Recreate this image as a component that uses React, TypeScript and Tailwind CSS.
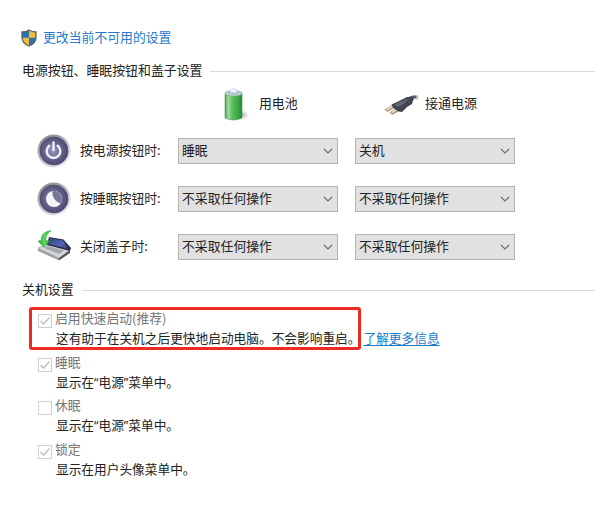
import type { ReactNode } from "react";

const ROWS = [
  { label: "按电源按钮时:", icon: <PowerIcon />, battery: "睡眠", plugged: "关机" },
  { label: "按睡眠按钮时:", icon: <SleepIcon />, battery: "不采取任何操作", plugged: "不采取任何操作" },
  { label: "关闭盖子时:", icon: <LidIcon />, battery: "不采取任何操作", plugged: "不采取任何操作" },
];

const OPTIONS = [
  {
    title: "启用快速启动(推荐)",
    desc: "这有助于在关机之后更快地启动电脑。不会影响重启。",
    checked: true,
    link: "了解更多信息",
  },
  { title: "睡眠", desc: "显示在“电源”菜单中。", checked: true },
  { title: "休眠", desc: "显示在“电源”菜单中。", checked: false },
  { title: "锁定", desc: "显示在用户头像菜单中。", checked: true },
];

function ShieldIcon() {
  return (
    <svg width="16" height="18" viewBox="0 0 16 18">
      <path d="M8 1 C6 2.4 3.5 3 1 3 V8 C1 12.5 4 15.5 8 17 C12 15.5 15 12.5 15 8 V3 C12.5 3 10 2.4 8 1Z" fill="#f3bd3c" />
      <path d="M8 1 C6 2.4 3.5 3 1 3 V8.8 H8Z" fill="#2a71ad" />
      <path d="M8 8.8 H15 C14.6 12.9 11.8 15.6 8 17Z" fill="#2a71ad" />
      <path d="M8 1 C6 2.4 3.5 3 1 3 V8 C1 12.5 4 15.5 8 17 C12 15.5 15 12.5 15 8 V3 C12.5 3 10 2.4 8 1Z" fill="none" stroke="#59636b" strokeWidth="1.3" />
    </svg>
  );
}

function BatteryIcon() {
  return (
    <svg width="32" height="36" viewBox="0 0 32 36">
      <defs>
        <linearGradient id="cell" x1="0" x2="1">
          <stop offset="0" stopColor="#4aa552" />
          <stop offset="0.2" stopColor="#a1dca0" />
          <stop offset="0.42" stopColor="#5fbe60" />
          <stop offset="0.8" stopColor="#35a340" />
          <stop offset="1" stopColor="#2a8535" />
        </linearGradient>
        <radialGradient id="cellShadow">
          <stop offset="0" stopColor="#8b8b8b" stopOpacity="0.7" />
          <stop offset="1" stopColor="#aaa" stopOpacity="0" />
        </radialGradient>
      </defs>
      <ellipse cx="22" cy="29" rx="7" ry="5" fill="url(#cellShadow)" />
      <path d="M5 8 V32 Q13.5 36 22 32 V8Z" fill="url(#cell)" stroke="#52965a" strokeWidth="0.6" />
      <ellipse cx="13.5" cy="7.5" rx="8.5" ry="2.8" fill="#b9d6bf" stroke="#71a77a" strokeWidth="0.8" />
      <path d="M8 6 Q10 2.5 13.5 2.500 Q17 2.500 19 6 L17.500 8.500 Q13.500 10 9.500 8.500Z" fill="#b4c1d7" />
      <ellipse cx="13.5" cy="4.800" rx="3.500" ry="1.800" fill="#f0f5f9" />
    </svg>
  );
}

function PlugIcon() {
  return (
    <svg width="36" height="24" viewBox="0 0 36 24" className="translate-y-px">
      <path d="M24 6.5 Q28 3.500 34 4.500" fill="none" stroke="#b3b4b9" strokeWidth="4" />
      <path d="M23 6.500 Q28 3 32 4" fill="none" stroke="#5c5e66" strokeWidth="2.600" />
      <path d="M1 16.500 L9 12 L11.500 14 L3 18.500Z" fill="#cba987" stroke="#765f51" strokeWidth="0.5" />
      <path d="M6 19.500 L13 15.500 L15.500 17.500 L8 21.500Z" fill="#cba987" stroke="#765f51" strokeWidth="0.5" />
      <path d="M2.500 16.500 L8 13.500 M7.500 19.500 L13 16.500" stroke="#fae6cb" strokeWidth="1.100" />
      <path d="M7.500 11.500 L15 8 L23 4 L30 4.500 L28 11 L23 14 L18 19 L15 18.500 Q9 16 7.500 11.500Z" fill="#42454f" />
      <path d="M10 11.500 L17 8.500 L25 5.500 L20 11 L14 14Z" fill="#626776" />
    </svg>
  );
}

function RoundButton({ id, children }: { id: string; children: ReactNode }) {
  return (
    <svg width="34" height="34" viewBox="0 0 34 34">
      <defs>
        <radialGradient id={id} cx="0.46" cy="0.48" r="0.58">
          <stop offset="0" stopColor="#9b9ac0" />
          <stop offset="0.55" stopColor="#64628c" />
          <stop offset="1" stopColor="#45426a" />
        </radialGradient>
        <linearGradient id={`${id}Rim`} x1="0" y1="0" x2="0.7" y2="1">
          <stop offset="0" stopColor="#797a82" />
          <stop offset="0.5" stopColor="#b4b4bd" />
          <stop offset="1" stopColor="#ecebf5" />
        </linearGradient>
      </defs>
      <circle cx="17" cy="17" r="16.5" fill={`url(#${id}Rim)`} />
      <circle cx="17" cy="17" r="14" fill={`url(#${id})`} stroke="#51506b" strokeWidth="0.8" />
      {children}
    </svg>
  );
}

function PowerIcon() {
  return (
    <RoundButton id="power">
      <path d="M12.3 11.8 A6.800 6.800 0 1 0 20.700 11.8" fill="none" stroke="#f1f0f8" strokeWidth="2.400" strokeLinecap="round" />
      <path d="M16.5 8.5 V16" stroke="#f1f0f8" strokeWidth="2.400" strokeLinecap="round" />
    </RoundButton>
  );
}

function SleepIcon() {
  return (
    <RoundButton id="sleep">
      <circle cx="17" cy="17" r="8" fill="#f5f5f8" />
      <path d="M15.500 9.200 A8 8 0 0 1 23.500 21.500 C19.500 20 14.500 15.500 15.500 9.200Z" fill="#77759a" />
    </RoundButton>
  );
}

function LidIcon() {
  return (
    <svg width="36" height="34" viewBox="0 0 36 34">
      <defs>
        <linearGradient id="screen" x1="0" y1="0" x2="1" y2="1">
          <stop offset="0" stopColor="#34437e" />
          <stop offset="0.6" stopColor="#5365b4" />
          <stop offset="1" stopColor="#343b68" />
        </linearGradient>
        <linearGradient id="arrow" x1="0" y1="0" x2="1" y2="0">
          <stop offset="0" stopColor="#239b32" />
          <stop offset="0.5" stopColor="#5fdb5e" />
          <stop offset="1" stopColor="#259938" />
        </linearGradient>
      </defs>
      <path d="M1 18 L22 27.500 V30.500 L1 21Z" fill="#a0a2a7" />
      <path d="M1 18 L9 14 L33 20 L22 28Z" fill="#d5d7da" stroke="#9a9da2" strokeWidth="0.6" />
      <path d="M7 18 L11 16 L27 20.500 L22 24Z" fill="#a4a8b0" />
      <path d="M22 28 L33 20 V23 L22 30.500Z" fill="#55565c" />
      <path d="M12 7 L26.500 9.500 L34 18 L33 21 L10 15Z" fill="#292d47" />
      <path d="M13 8 L26 10.500 L31.500 19 L12 14Z" fill="url(#screen)" />
      <path d="M14 0.800 C7 1.500 3.500 5.500 4.500 10.500 L1 11 L7 17.500 L12.500 11 L9 10.500 C8.500 6.500 10 3.500 14 0.800Z" fill="url(#arrow)" stroke="#31ab3e" strokeWidth="0.6" />
    </svg>
  );
}

function SectionTitle({ children }: { children: ReactNode }) {
  return (
    <div className="flex h-5 items-center pl-[22px] pr-[5px]">
      <h2 className="whitespace-nowrap pb-0.5 text-[12.9px]">{children}</h2>
      <div className="ml-2 h-px flex-1 bg-[#dadada]" />
    </div>
  );
}

function Select({ value }: { value: string }) {
  return (
    <button type="button" className="flex h-[26px] w-40 items-center justify-between border border-[#b4b4b4] bg-[#e1e1e1] pl-[3px] pr-1 text-left">
      <span className="pb-0.5">{value}</span>
      <svg width="10" height="6" viewBox="0 0 10 6">
        <path d="M0.8 0.8 L5 5 L9.2 0.8" fill="none" stroke="#666" strokeWidth="1.2" />
      </svg>
    </button>
  );
}

function Checkbox({ checked }: { checked: boolean }) {
  return (
    <span className="mt-[5px] flex h-[14px] w-[14px] items-center justify-center border border-[#cfcfcf] bg-white">
      {checked && (
        <svg width="12" height="12" viewBox="0 0 12 12">
          <path d="M1.5 6 L4.5 9 L10.5 2.5" fill="none" stroke="#bdbdbd" strokeWidth="1.3" />
        </svg>
      )}
    </span>
  );
}

export default function App() {
  return (
    <main className="h-[508px] w-[600px] overflow-hidden bg-white pt-6 font-['Noto_Sans_CJK_SC',sans-serif] text-[12.85px] leading-5 text-[#222]">
      <div className="flex h-7 items-center pl-[21px] text-[#2878cd]">
        <ShieldIcon />
        <a href="#" className="ml-1.5 pb-0.5">更改当前不可用的设置</a>
      </div>

      <section className="mt-[9px]">
        <SectionTitle>电源按钮、睡眠按钮和盖子设置</SectionTitle>
        <div className="flex h-[46px] items-center pl-[220px]">
          <div className="flex w-[164px] items-center gap-[7px]">
            <BatteryIcon />
            <span className="pb-0.5">用电池</span>
          </div>
          <div className="flex items-center gap-[5px] text-[13px]">
            <PlugIcon />
            <span className="pb-0.5">接通电源</span>
          </div>
        </div>
        {ROWS.map(row => (
          <div key={row.label} className="flex h-12 items-center pl-[37px]">
            <span className="w-[43px]">{row.icon}</span>
            <span className="w-[98px] pb-0.5">{row.label}</span>
            <div className="flex gap-[17px]">
              <Select value={row.battery} />
              <Select value={row.plugged} />
            </div>
          </div>
        ))}
      </section>

      <section className="mt-[9px]">
        <SectionTitle>关机设置</SectionTitle>
        <div className="relative flex flex-col gap-[3.5px] pl-[38px] pt-[9px]">
          {OPTIONS.map(option => (
            <div key={option.title} className="flex h-10 gap-[3px]">
              <Checkbox checked={option.checked} />
              <div className="-mt-px">
                <div className="text-[#777]">{option.title}</div>
                <div className="flex whitespace-nowrap pl-px font-['Open_Sans','Noto_Sans_CJK_SC',sans-serif] text-[12.7px]">
                  <span>{option.desc}</span>
                  {option.link && <a href="#" className="ml-[3px] text-[#1979ca] underline underline-offset-2">{option.link}</a>}
                </div>
              </div>
            </div>
          ))}
          {/* highlight around the fast startup option */}
          <div className="absolute left-[29px] top-[7px] h-[43px] w-[332px] rounded-[3px] border-[3px] border-[#ee2a24]" />
        </div>
      </section>
    </main>
  );
}
